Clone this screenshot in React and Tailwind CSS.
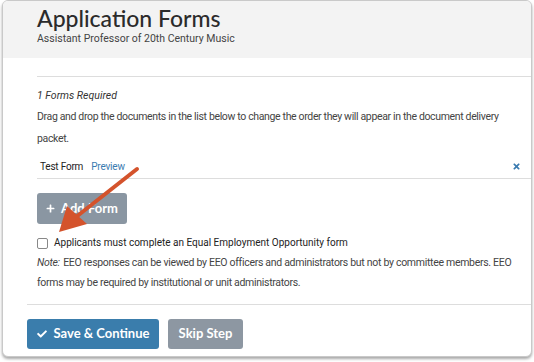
import { FaCheck, FaPlus, FaTimes } from 'react-icons/fa';

export default function App() {
  return (
    <div className="relative w-[534px] h-[362px] bg-white overflow-hidden font-['Roboto',sans-serif] text-[#333]">
      <div className="ml-[2px] w-[530px] h-[357px] border border-[#c9c9c9] rounded-md bg-white shadow-[0_2px_3px_rgba(0,0,0,0.35)] overflow-hidden flex flex-col">
        {/* header */}
        <div className="h-[57px] bg-[#f3f3f3] pl-[34px] pt-[3px]">
          <h1 className="font-['Lato',sans-serif] text-[23px] leading-[28px] font-medium text-[#2b2b2b]">
            Application Forms
          </h1>
          <p className="text-[10.5px] leading-[13px] text-[#444]">Assistant Professor of 20th Century Music</p>
        </div>

        {/* body */}
        <div className="pl-[34px] pt-[18px]">
          <div className="border-t border-[#ddd]" />
          <p className="mt-[9px] text-[10.5px] leading-[20px] italic text-[#333]">1 Forms Required</p>
          <p className="text-[10.5px] leading-[22px] pr-[10px] text-[#444] tracking-[-0.35px]">
            Drag and drop the documents in the list below to change the order they will appear in the document delivery packet.
          </p>
          <div className="mt-[4px] h-[25px] flex items-center justify-between border-b border-[#ddd] pl-[3px] pr-[10px] text-[10px] tracking-[-0.2px]">
            <div className="flex items-center gap-[8px]">
              <span className="text-[#222]">Test Form</span>
              <span className="text-[#3a7bb0]">Preview</span>
            </div>
            <FaTimes className="text-[#3a7bb0] w-[9px] h-[9px]" />
          </div>
          <button className="mt-[14px] w-[90px] h-[31px] rounded-[3px] bg-[#8a96a2] text-white font-['Lato',sans-serif] font-bold text-[13px] flex items-center justify-center gap-[6px]">
            <FaPlus className="w-[9px] h-[9px]" />
            Add Form
          </button>
          <label className="mt-[13px] flex items-center gap-[6px] text-[10px] leading-[12px] text-[#222]">
            <span className="w-[11px] h-[11px] border border-[#888] rounded-[2px] bg-white" />
            Applicants must complete an Equal Employment Opportunity form
          </label>
          <p className="mt-[4px] text-[10.5px] leading-[20px] text-[#444] pr-[4px] tracking-[-0.3px]">
            <i className="pr-[1px]">Note:</i> EEO responses can be viewed by EEO officers and administrators but not by committee members. EEO forms may be required by institutional or unit administrators.
          </p>
        </div>

        {/* footer */}
        <div className="pl-[24px] mt-[11px]">
          <div className="border-t border-[#ddd]" />
          <div className="mt-[14px] flex gap-[9px]">
            <button className="w-[132px] h-[30px] rounded-[3px] bg-[#3a7dac] text-white font-['Lato',sans-serif] font-bold text-[13px] flex items-center justify-center gap-[7px]">
              <FaCheck className="w-[10px] h-[10px]" />
              Save &amp; Continue
            </button>
            <button className="w-[75px] h-[30px] rounded-[3px] bg-[#8d97a2] text-white font-['Lato',sans-serif] font-bold text-[13px]">
              Skip Step
            </button>
          </div>
        </div>
      </div>

      {/* annotation arrow */}
      <svg className="absolute left-0 top-0" width="534" height="362">
        <line x1="137" y1="169" x2="76" y2="217" stroke="#d4532c" strokeWidth="4" strokeLinecap="round" />
        <polygon points="59,232 67,206 87,224" fill="#d4532c" />
      </svg>
    </div>
  );
}
